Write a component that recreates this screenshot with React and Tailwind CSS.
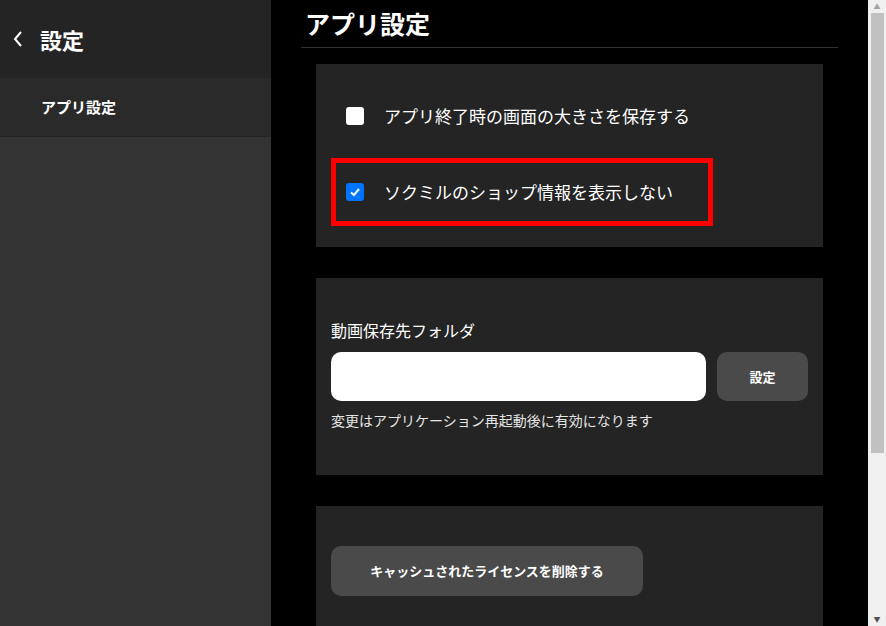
export default function App() {
  const font = { fontFamily: '"Noto Sans CJK JP", "Noto Sans", sans-serif' };
  return (
    <div style={font} className="flex h-[626px] w-[886px] overflow-hidden bg-black text-white">
      {/* Sidebar */}
      <aside className="flex w-[271px] shrink-0 flex-col bg-[#333333]">
        <div className="flex h-[78px] items-center gap-[14px] bg-[#242424] pl-[12px]">
          <svg width="14" height="18" viewBox="0 0 14 18" fill="none" stroke="white" strokeWidth="2">
            <path d="M9 2 L3 9 L9 16" />
          </svg>
          <span className="text-[22px] font-bold">設定</span>
        </div>
        <div className="flex h-[59px] items-center border-b border-[#222] bg-[#2a2a2a] pl-[41px] text-[15px] font-bold">
          アプリ設定
        </div>
      </aside>

      {/* Main */}
      <main className="flex flex-1 flex-col pl-[30px] pr-[30px]">
        <div className="flex h-[78px] items-center border-b border-[#333] pl-[4px]">
          <h1 className="text-[25px] font-bold">アプリ設定</h1>
        </div>
        <div className="flex flex-col gap-[31px] pl-[15px] pr-[15px] pt-[16px]">
          <section className="flex h-[183px] flex-col bg-[#242424] px-[15px] pt-[30px]">
            <label className="flex h-[44px] items-center gap-[20px] pl-[15px] text-[17px]">
              <span className="h-[18px] w-[18px] rounded-[3px] bg-white" />
              アプリ終了時の画面の大きさを保存する
            </label>
            <div className="mt-[20px] flex h-[68px] w-[382px] items-center gap-[20px] border-[5px] border-[#ff0000] pl-[10px] text-[17px]">
              <span className="flex h-[18px] w-[18px] items-center justify-center rounded-[3px] bg-[#0075ff]">
                <svg width="12" height="12" viewBox="0 0 12 12" fill="none" stroke="white" strokeWidth="2">
                  <path d="M2 6.5 L5 9 L10 3" />
                </svg>
              </span>
              ソクミルのショップ情報を表示しない
            </div>
          </section>

          <section className="flex h-[197px] flex-col bg-[#242424] px-[15px] pt-[40px]">
            <div className="text-[16px]">動画保存先フォルダ</div>
            <div className="mt-[10px] flex gap-[11px]">
              <div className="h-[49px] w-[375px] rounded-[10px] bg-white" />
              <button className="h-[49px] w-[91px] rounded-[10px] bg-[#4a4a4a] text-[13px] font-bold">設定</button>
            </div>
            <div className="mt-[9px] text-[14px] text-[#e5e5e5]">変更はアプリケーション再起動後に有効になります</div>
          </section>

          <section className="flex h-[120px] flex-col bg-[#242424] px-[15px] pt-[40px]">
            <button className="h-[50px] w-[312px] rounded-[10px] bg-[#4a4a4a] text-[13px] font-bold">
              キャッシュされたライセンスを削除する
            </button>
          </section>
        </div>
      </main>

      {/* Scrollbar */}
      <div className="flex w-[18px] shrink-0 flex-col items-center bg-[#f0f0f0]">
        <div className="flex h-[13px] items-center text-[7px] text-[#a3a3a3]">▲</div>
        <div className="h-[440px] w-[13px] bg-[#c1c1c1]" />
        <div className="flex-1" />
        <div className="flex h-[14px] items-center text-[7px] text-[#505050]">▼</div>
      </div>
    </div>
  );
}
